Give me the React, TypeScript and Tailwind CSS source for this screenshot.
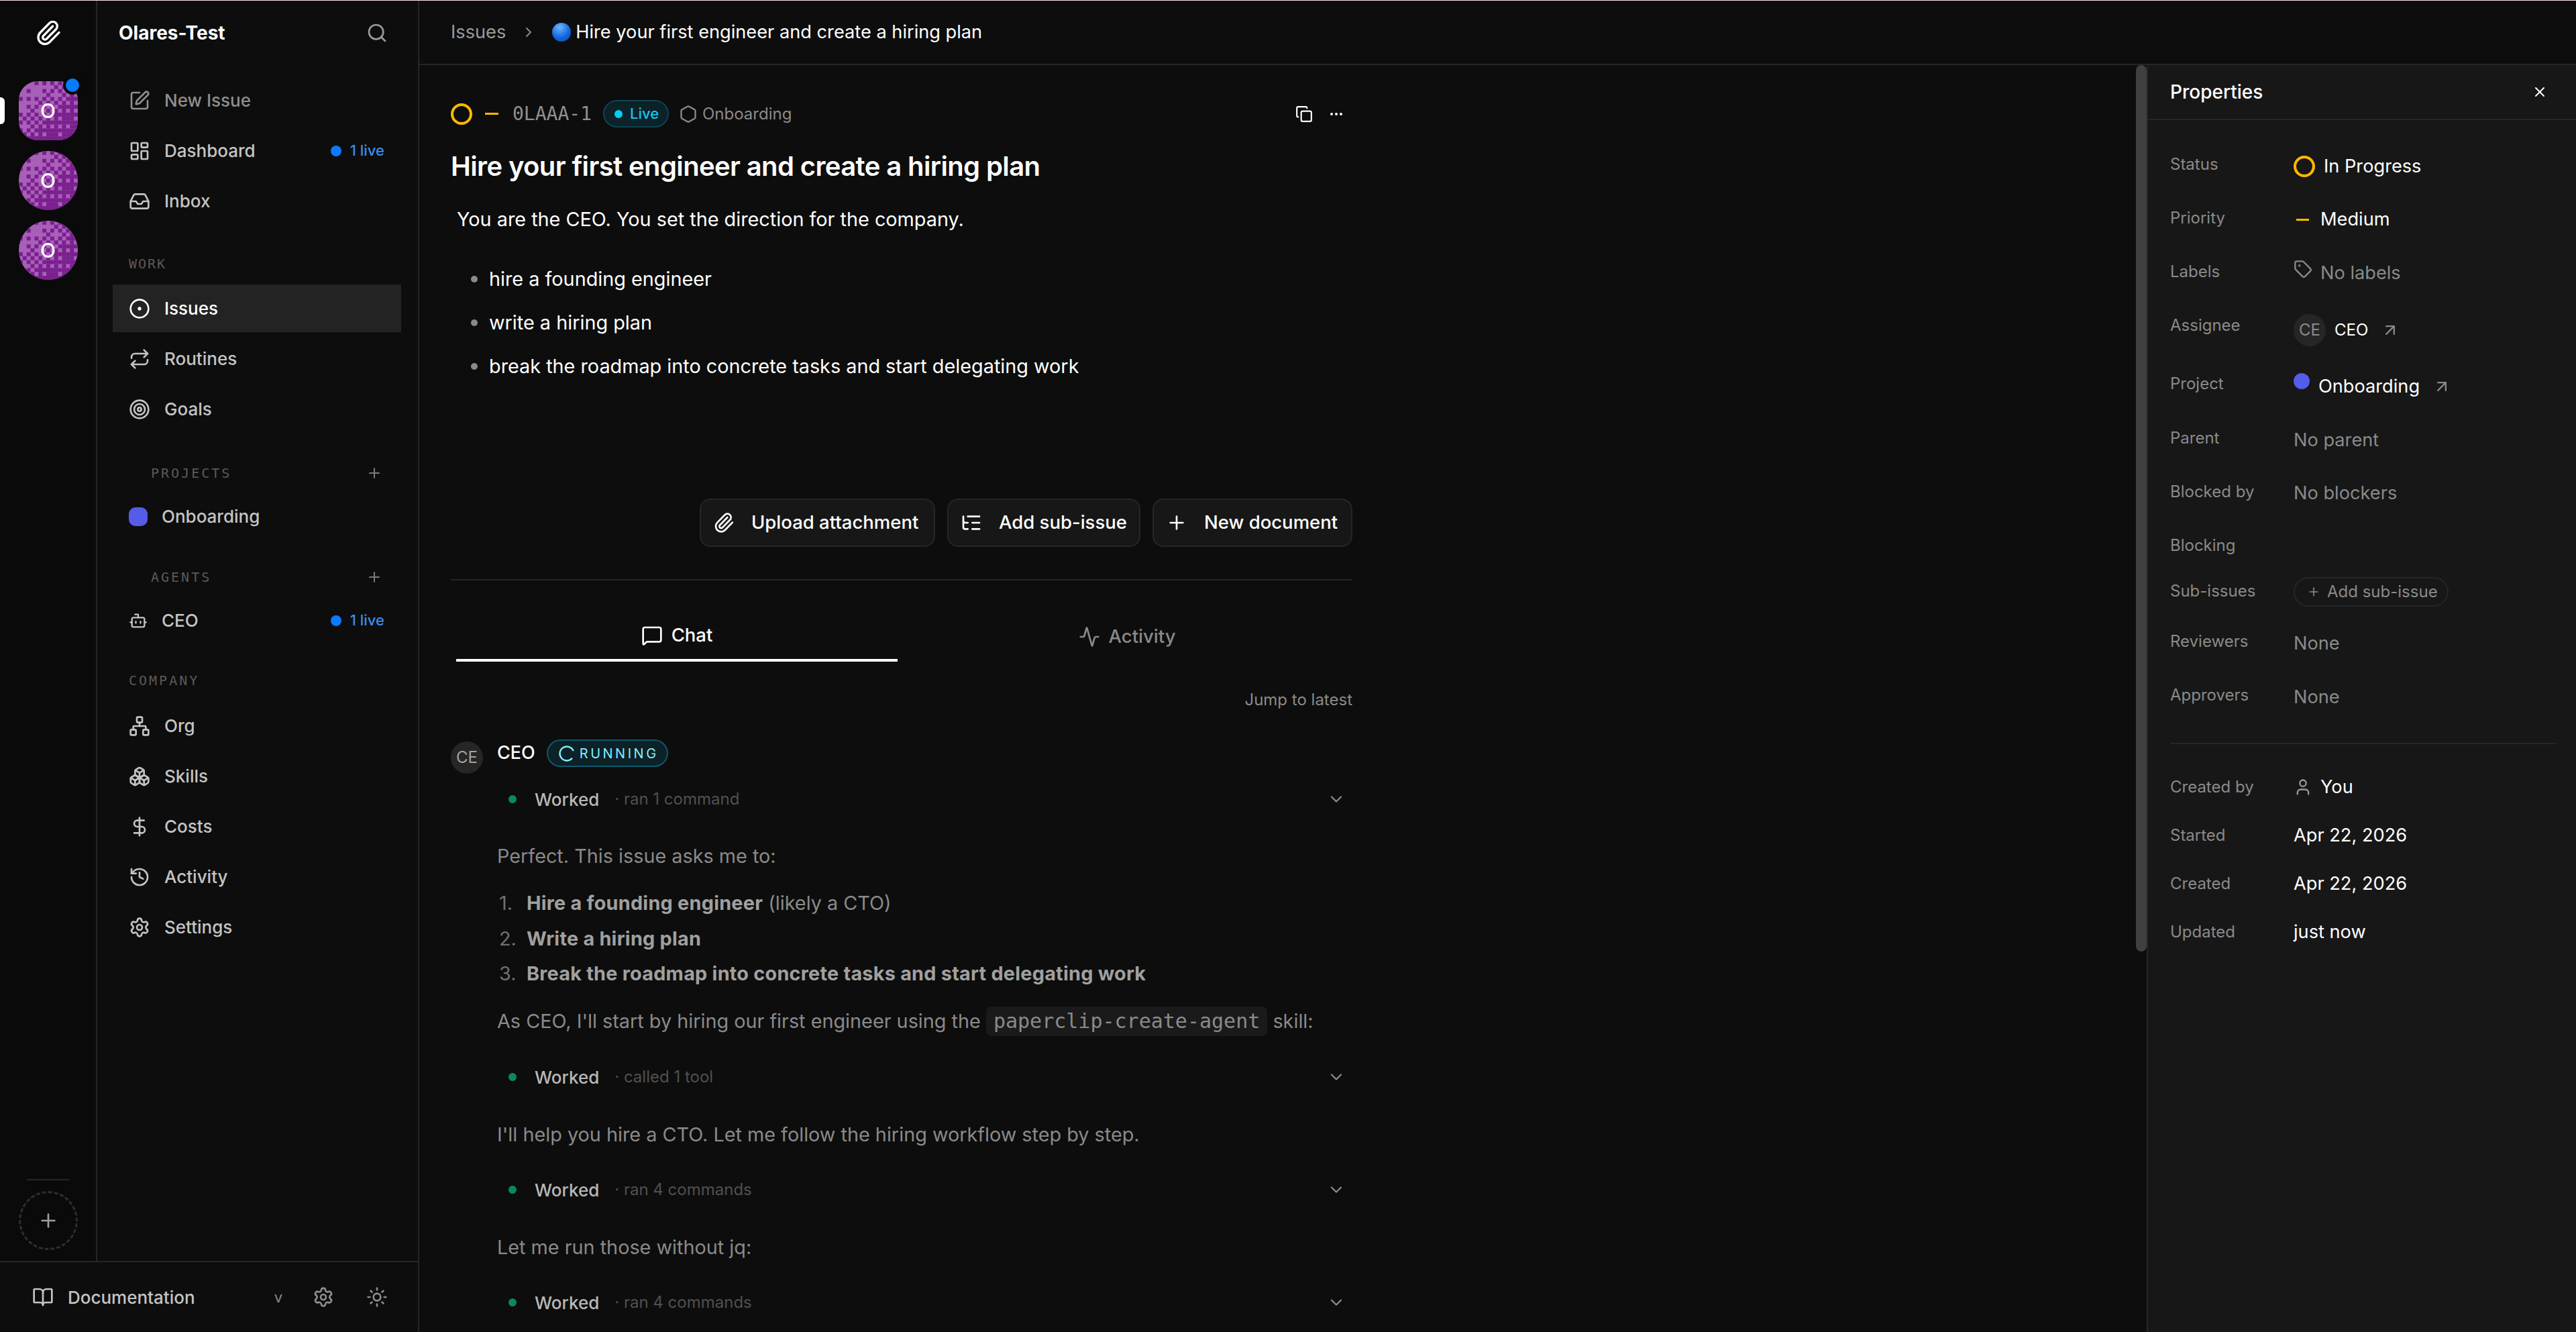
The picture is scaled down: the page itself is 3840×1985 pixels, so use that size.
import type { ReactNode } from "react";
import {
  Activity,
  ArrowUpRight,
  BookOpen,
  Bot,
  Boxes,
  ChevronDown,
  ChevronRight,
  CircleDot,
  Copy,
  DollarSign,
  Ellipsis,
  Hexagon,
  History,
  Inbox,
  LayoutDashboard,
  ListTree,
  LoaderCircle,
  MessageSquare,
  Network,
  Paperclip,
  Plus,
  Repeat,
  Search,
  Settings,
  SquarePen,
  Sun,
  Tag,
  Target,
  User,
  X,
} from "lucide-react";

const BAYER = [
  [0, 8, 2, 10],
  [12, 4, 14, 6],
  [3, 11, 1, 9],
  [15, 7, 13, 5],
];

// ordered dither behind the company avatars, light top left to dark bottom right
function Speckle() {
  const cells = [];
  for (let y = 0; y < 15; y++) {
    for (let x = 0; x < 15; x++) {
      const t = (x + y) / 28;
      if ((BAYER[y % 4][x % 4] + 0.5) / 16 < t * 1.1 - 0.02) {
        cells.push(<rect key={`${x}-${y}`} x={x * 6} y={y * 6} width={6} height={6} fill="#7a1f8e" />);
      }
    }
  }
  return (
    <svg viewBox="0 0 90 90" className="absolute inset-0 w-full h-full">
      {cells}
    </svg>
  );
}

function CompanyTile({ square, badge }: { square?: boolean; badge?: boolean }) {
  return (
    <div className="relative w-[88px] h-[88px]">
      <div className={`relative w-full h-full overflow-hidden bg-[#a85fb8] flex items-center justify-center ${square ? "rounded-[28px]" : "rounded-full"}`}>
        <Speckle />
        <span className="relative text-white text-[30px] font-medium">O</span>
      </div>
      {badge && <span className="absolute -top-[8px] -right-[6px] w-[28px] h-[28px] rounded-full bg-[#0a7aff] border-4 border-[#0a0a0a]" />}
    </div>
  );
}

function NavRow({
  icon,
  label,
  live,
  muted,
  active,
}: {
  icon: ReactNode;
  label: string;
  live?: boolean;
  muted?: boolean;
  active?: boolean;
}) {
  const tone = active ? "bg-[#232323] text-white" : muted ? "text-[#8f8f8f]" : "text-[#c4c4c4]";
  return (
    <div className={`flex items-center h-[71px] pl-[24px] pr-[25px] text-[26px] font-medium ${tone}`}>
      {icon}
      <span className="ml-[21px]">{label}</span>
      {live && <LiveBadge />}
    </div>
  );
}

function LiveBadge() {
  return (
    <span className="ml-auto flex items-center gap-[13px] text-[22px] text-[#3b8cf0]">
      <span className="w-[16px] h-[16px] rounded-full bg-[#0a7aff]" />1 live
    </span>
  );
}

function SectionLabel({ children, className, add }: { children: ReactNode; className: string; add?: boolean }) {
  return (
    <div className={`flex items-center h-[28px] pr-[28px] font-['DejaVu_Sans_Mono',monospace] text-[20px] tracking-[2px] text-[#5a5a5a] ${className}`}>
      {children}
      {add && <Plus size={24} className="ml-auto text-[#7a7a7a]" />}
    </div>
  );
}

function Worked({ meta, className }: { meta: string; className: string }) {
  return (
    <div className={`flex items-center h-[60px] pl-[17px] pr-[10px] ${className}`}>
      <span className="w-[12px] h-[12px] rounded-full bg-[#0a8a5c]" />
      <span className="ml-[27px] text-[26px] font-medium text-[#b8b8b8]">Worked</span>
      <span className="ml-[23px] text-[24px] text-[#505050]">· {meta}</span>
      <ChevronDown size={28} className="ml-auto text-[#8a8a8a]" />
    </div>
  );
}

function PropRow({ label, rowClass, children, valueClass = "" }: { label: string; rowClass: string; children?: ReactNode; valueClass?: string }) {
  return (
    <div className={`flex items-center ${rowClass}`}>
      <span className="w-[184px] text-[24px] text-[#8a8a8a]">{label}</span>
      <div className={`flex items-center text-[27.2px] ${valueClass}`}>{children}</div>
    </div>
  );
}

export default function App() {
  return (
    <div className="h-screen overflow-hidden flex flex-col bg-[#0d0d0d] font-['Inter',sans-serif] text-white">
      <div className="h-px bg-[#f6e3e3] shrink-0" />
      <div className="flex flex-1 min-h-0">
        {/* Left column */}
        <div className="w-[625px] shrink-0 flex flex-col border-r-2 border-[#262626]">
          <div className="flex flex-1 min-h-0">
            {/* Company rail */}
            <div className="relative w-[145px] shrink-0 flex flex-col items-center bg-[#0a0a0a] border-r-2 border-[#262626]">
              <div className="h-[96px] flex items-center justify-center">
                <Paperclip size={40} className="text-white" />
              </div>
              <span className="absolute left-0 top-[144px] w-[7px] h-[40px] rounded-r-md bg-white" />
              <div className="mt-[24px] flex flex-col gap-4">
                <CompanyTile square badge />
                <CompanyTile />
                <CompanyTile />
              </div>
              <div className="mt-auto w-[64px] h-[2px] bg-[#262626]" />
              <div className="mt-[16px] mb-[16px] w-[88px] h-[88px] rounded-full border-[3px] border-dashed border-[#2e2e2e] flex items-center justify-center">
                <Plus size={32} className="text-[#a0a0a0]" />
              </div>
            </div>

            {/* Sidebar */}
            <div className="flex-1 min-w-0 flex flex-col bg-[#0d0d0d] pl-[23px] pr-[25px]">
              <div className="h-[96px] shrink-0 flex items-center justify-between pl-[9px] pr-[20px]">
                <span className="text-[28px] font-bold">Olares-Test</span>
                <Search size={32} className="text-[#9a9a9a]" />
              </div>
              <div className="mt-[17px] flex flex-col gap-1">
                <NavRow muted icon={<SquarePen size={32} />} label="New Issue" />
                <NavRow icon={<LayoutDashboard size={32} />} label="Dashboard" live />
                <NavRow icon={<Inbox size={32} />} label="Inbox" />
              </div>
              <SectionLabel className="mt-[44px] mb-[17px] pl-[24px]">WORK</SectionLabel>
              <div className="flex flex-col gap-1">
                <NavRow active icon={<CircleDot size={32} />} label="Issues" />
                <NavRow icon={<Repeat size={32} />} label="Routines" />
                <NavRow icon={<Target size={32} />} label="Goals" />
              </div>
              <SectionLabel add className="mt-[46px] mb-[15px] pl-[57px] tracking-[3px]">PROJECTS</SectionLabel>
              <NavRow icon={<span className="w-[28px] h-[28px] rounded-[10px] bg-[#555ce8]" />} label="Onboarding" />
              <SectionLabel add className="mt-[41px] mb-[15px] pl-[57px] tracking-[3px]">AGENTS</SectionLabel>
              <NavRow icon={<Bot size={28} />} label="CEO" live />
              <SectionLabel className="mt-[40px] mb-[18px] pl-[24px] tracking-[3px]">COMPANY</SectionLabel>
              <div className="flex flex-col gap-1">
                <NavRow icon={<Network size={32} />} label="Org" />
                <NavRow icon={<Boxes size={32} />} label="Skills" />
                <NavRow icon={<DollarSign size={32} />} label="Costs" />
                <NavRow icon={<History size={32} />} label="Activity" />
                <NavRow icon={<Settings size={32} />} label="Settings" />
              </div>
            </div>
          </div>

          {/* Footer */}
          <div className="h-[106px] shrink-0 flex items-center pl-[48px] pr-[45px] border-t-2 border-[#262626]">
            <BookOpen size={32} className="text-[#c4c4c4]" />
            <span className="ml-[21px] text-[26px] font-medium text-[#c4c4c4]">Documentation</span>
            <span className="ml-auto text-[22px] text-[#8a8a8a]">v</span>
            <Settings size={32} className="ml-[45px] text-[#8f8f8f]" />
            <Sun size={32} className="ml-[48px] text-[#8f8f8f]" />
          </div>
        </div>

        {/* Right side */}
        <div className="flex-1 min-w-0 flex flex-col">
          {/* Breadcrumb */}
          <div className="h-[96px] shrink-0 flex items-center pl-[47px] border-b-2 border-[#262626]">
            <span className="text-[27.2px] text-[#9a9a9a]">Issues</span>
            <ChevronRight size={24} className="ml-[22px] text-[#8a8a8a]" />
            <span className="ml-[23px] w-[28px] h-[28px] rounded-full bg-[radial-gradient(circle_at_40%_25%,#6db4ff,#1467e0_55%,#0b3fa8)]" />
            <span className="ml-[7px] text-[27.2px]">Hire your first engineer and create a hiring plan</span>
          </div>

          <div className="flex flex-1 min-h-0">
            {/* Issue content */}
            <div className="flex-1 min-w-0 overflow-hidden pl-[47px] pt-[52px]">
              <div className="w-[1344px] flex flex-col">
                <div className="flex items-center h-[41px]">
                  <span className="w-[32px] h-[32px] rounded-full border-4 border-[#ffb900]" />
                  <span className="ml-[19px] w-[20px] h-[3px] bg-[#ffb900]" />
                  <span className="ml-[21px] font-['DejaVu_Sans_Mono',monospace] text-[28px] text-[#909090]">0LAAA-1</span>
                  <span className="ml-[17px] flex items-center h-[41px] w-[98px] pl-[15px] rounded-full bg-[#0c2128] border-2 border-[#0d4552] text-[22px] font-medium text-[#12c8ee]">
                    <span className="w-[12px] h-[12px] rounded-full bg-[#00cff5]" />
                    <span className="ml-[11px]">Live</span>
                  </span>
                  <Hexagon size={28} className="ml-[15px] text-[#8a8a8a]" />
                  <span className="ml-[7px] text-[24px] text-[#8a8a8a]">Onboarding</span>
                  <Copy size={26} className="ml-auto" />
                  <Ellipsis size={24} className="ml-[23px] mr-[12px]" />
                </div>

                <h1 className="mt-[30px] text-[40px] leading-[56px] font-semibold tracking-[-0.62px]">Hire your first engineer and create a hiring plan</h1>
                <p className="mt-[29px] pl-[9px] text-[28.8px] leading-[44px]">You are the CEO. You set the direction for the company.</p>

                <ul className="mt-[45px] flex flex-col gap-[21px] text-[28.8px] leading-[44px]">
                  {["hire a founding engineer", "write a hiring plan", "break the roadmap into concrete tasks and start delegating work"].map((t) => (
                    <li key={t} className="flex items-center pl-[30px]">
                      <span className="w-[10px] h-[10px] rounded-full bg-[#8a8a8a]" />
                      <span className="ml-[17px]">{t}</span>
                    </li>
                  ))}
                </ul>

                <div className="mt-[175px] flex justify-end gap-[18px]">
                  <button className="w-[351px] h-[72px] flex items-center gap-[25px] pl-[18px] rounded-2xl bg-[#171717] border-2 border-[#262626] text-[27.5px] font-medium">
                    <Paperclip size={32} />
                    Upload attachment
                  </button>
                  <button className="w-[288px] h-[72px] flex items-center gap-[25px] pl-[18px] rounded-2xl bg-[#171717] border-2 border-[#262626] text-[27.5px] font-medium">
                    <ListTree size={32} />
                    Add sub-issue
                  </button>
                  <button className="w-[298px] h-[72px] flex items-center gap-[25px] pl-[18px] rounded-2xl bg-[#171717] border-2 border-[#262626] text-[27.5px] font-medium">
                    <Plus size={32} />
                    New document
                  </button>
                </div>

                <div className="mt-[48px] h-[2px] bg-[#262626]" />

                <div className="mt-[47px] grid grid-cols-2 h-[74px]">
                  <div className="ml-2 mr-[6px] flex items-center justify-center gap-[13px] border-b-4 border-white text-[27.5px] font-medium">
                    <MessageSquare size={32} />
                    Chat
                  </div>
                  <div className="flex items-center justify-center gap-[13px] text-[27.5px] font-medium text-[#8a8a8a]">
                    <Activity size={32} />
                    Activity
                  </div>
                </div>

                <div className="mt-[41px] h-[32px] text-right text-[24px] leading-[32px] text-[#8a8a8a]">Jump to latest</div>

                <div className="mt-[43px] flex">
                  <span className="mt-[3px] w-[48px] h-[48px] rounded-full bg-[#262626] flex items-center justify-center text-[24px] text-[#a3a3a3]">CE</span>
                  <div className="ml-[21px] flex-1 min-w-0">
                    <div className="flex items-center h-[41px]">
                      <span className="text-[27px] font-medium">CEO</span>
                      <span className="ml-[17px] flex items-center h-[41px] w-[181px] pl-[14px] rounded-full bg-[#0c2128] border-2 border-[#0c5a6b] text-[20px] tracking-[3.5px] text-[#86eefc]">
                        <LoaderCircle size={28} className="rotate-45" />
                        <span className="ml-[5px]">RUNNING</span>
                      </span>
                    </div>

                    <Worked meta="ran 1 command" className="mt-[18px]" />

                    <p className="mt-[33px] text-[28.8px] leading-[44px] text-[#8a8a8a]">Perfect. This issue asks me to:</p>
                    <ol className="mt-[26px] flex flex-col gap-[8.5px] text-[28.8px] leading-[44px] text-[#8a8a8a]">
                      <li className="flex pl-[3px]">
                        <span className="w-[41px] text-[#707070]">1.</span>
                        <span>
                          <strong className="font-bold tracking-[0.25px] text-[#a0a0a0]">Hire a founding engineer</strong> (likely a CTO)
                        </span>
                      </li>
                      <li className="flex pl-[3px]">
                        <span className="w-[41px] text-[#707070]">2.</span>
                        <strong className="font-bold tracking-[0.25px] text-[#a0a0a0]">Write a hiring plan</strong>
                      </li>
                      <li className="flex pl-[3px]">
                        <span className="w-[41px] text-[#707070]">3.</span>
                        <strong className="font-bold tracking-[0.25px] text-[#a0a0a0]">Break the roadmap into concrete tasks and start delegating work</strong>
                      </li>
                    </ol>
                    <p className="mt-[27px] text-[28.8px] leading-[44px] text-[#8a8a8a]">
                      As CEO, I'll start by hiring our first engineer using the{" "}
                      <code className="inline-block h-[44px] px-[11px] rounded-lg bg-[#1a1a1a] font-['DejaVu_Sans_Mono',monospace] text-[30px] leading-[44px]">paperclip-create-agent</code>{" "}
                      skill:
                    </p>

                    <Worked meta="called 1 tool" className="mt-[31px]" />
                    <p className="mt-[34px] text-[28.8px] leading-[44px] text-[#8a8a8a]">I'll help you hire a CTO. Let me follow the hiring workflow step by step.</p>
                    <Worked meta="ran 4 commands" className="mt-[30px]" />
                    <p className="mt-[34px] text-[28.8px] leading-[44px] text-[#8a8a8a]">Let me run those without jq:</p>
                    <Worked meta="ran 4 commands" className="mt-[30px]" />
                  </div>
                </div>
              </div>
            </div>

            {/* Scrollbar */}
            <div className="w-[16px] shrink-0">
              <div className="h-[1321px] rounded-full bg-[#404040]" />
            </div>

            {/* Properties panel */}
            <div className="w-[640px] shrink-0 bg-[#171717] border-l-2 border-[#262626]">
              <div className="h-[82px] flex items-center justify-between pl-[33px] pr-[42px] border-b-2 border-[#262626]">
                <span className="text-[28px] font-medium">Properties</span>
                <X size={24} />
              </div>
              <div className="pl-[33px] pr-[30px] pt-[26px]">
                <PropRow label="Status" rowClass="h-[80px]" valueClass="mt-[6px]">
                  <span className="w-[32px] h-[32px] rounded-full border-4 border-[#ffb900]" />
                  <span className="ml-[13px]">In Progress</span>
                </PropRow>
                <PropRow label="Priority" rowClass="h-[80px]" valueClass="mt-[5px]">
                  <span className="ml-[4px] w-[19px] h-[3px] bg-[#ffb900]" />
                  <span className="ml-[17px]">Medium</span>
                </PropRow>
                <PropRow label="Labels" rowClass="h-[79px]" valueClass="mt-[6px] text-[#8a8a8a]">
                  <Tag size={28} className="-mt-[12px] text-[#8a8a8a]" />
                  <span className="ml-[12px]">No labels</span>
                </PropRow>
                <PropRow label="Assignee" rowClass="h-[82px]" valueClass="mt-[14px]">
                  <span className="w-[48px] h-[48px] rounded-full bg-[#262626] flex items-center justify-center text-[24px] text-[#8a8a8a]">CE</span>
                  <span className="ml-[13px] text-[24px]">CEO</span>
                  <ArrowUpRight size={28} className="ml-[19px] text-[#8a8a8a]" />
                </PropRow>
                <PropRow label="Project" rowClass="h-[92px]" valueClass="mt-[8px]">
                  <span className="-mt-[16px] w-[24px] h-[24px] rounded-full bg-[#555ce8]" />
                  <span className="ml-[13px]">Onboarding</span>
                  <ArrowUpRight size={28} className="ml-[19px] text-[#8a8a8a]" />
                </PropRow>
                <PropRow label="Parent" rowClass="h-[70px]" valueClass="mt-[6px] text-[#8a8a8a]">No parent</PropRow>
                <PropRow label="Blocked by" rowClass="h-[89px]" valueClass="mt-[6px] text-[#8a8a8a]">No blockers</PropRow>
                <PropRow label="Blocking" rowClass="h-[71px]" />
                <PropRow label="Sub-issues" rowClass="h-[66px]" valueClass="mt-[2px]">
                  <span className="flex items-center h-[44px] pl-[18px] pr-[14px] rounded-full border-2 border-[#262626] text-[24px] text-[#8a8a8a]">
                    <Plus size={20} />
                    <span className="ml-[10px]">Add sub-issue</span>
                  </span>
                </PropRow>
                <PropRow label="Reviewers" rowClass="h-[84px]" valueClass="mt-[6px] text-[#8a8a8a]">None</PropRow>
                <PropRow label="Approvers" rowClass="h-[76px]" valueClass="mt-[6px] text-[#8a8a8a]">None</PropRow>
                <div className="mt-[33px] h-[2px] bg-[#262626]" />
                <div className="pt-[28px]">
                  <PropRow label="Created by" rowClass="h-[72px]">
                    <User size={28} className="text-[#9a9a9a]" />
                    <span className="ml-[12px]">You</span>
                  </PropRow>
                  <PropRow label="Started" rowClass="h-[72px]">Apr 22, 2026</PropRow>
                  <PropRow label="Created" rowClass="h-[72px]">Apr 22, 2026</PropRow>
                  <PropRow label="Updated" rowClass="h-[72px]">just now</PropRow>
                </div>
              </div>
            </div>
          </div>
        </div>
      </div>
    </div>
  );
}
